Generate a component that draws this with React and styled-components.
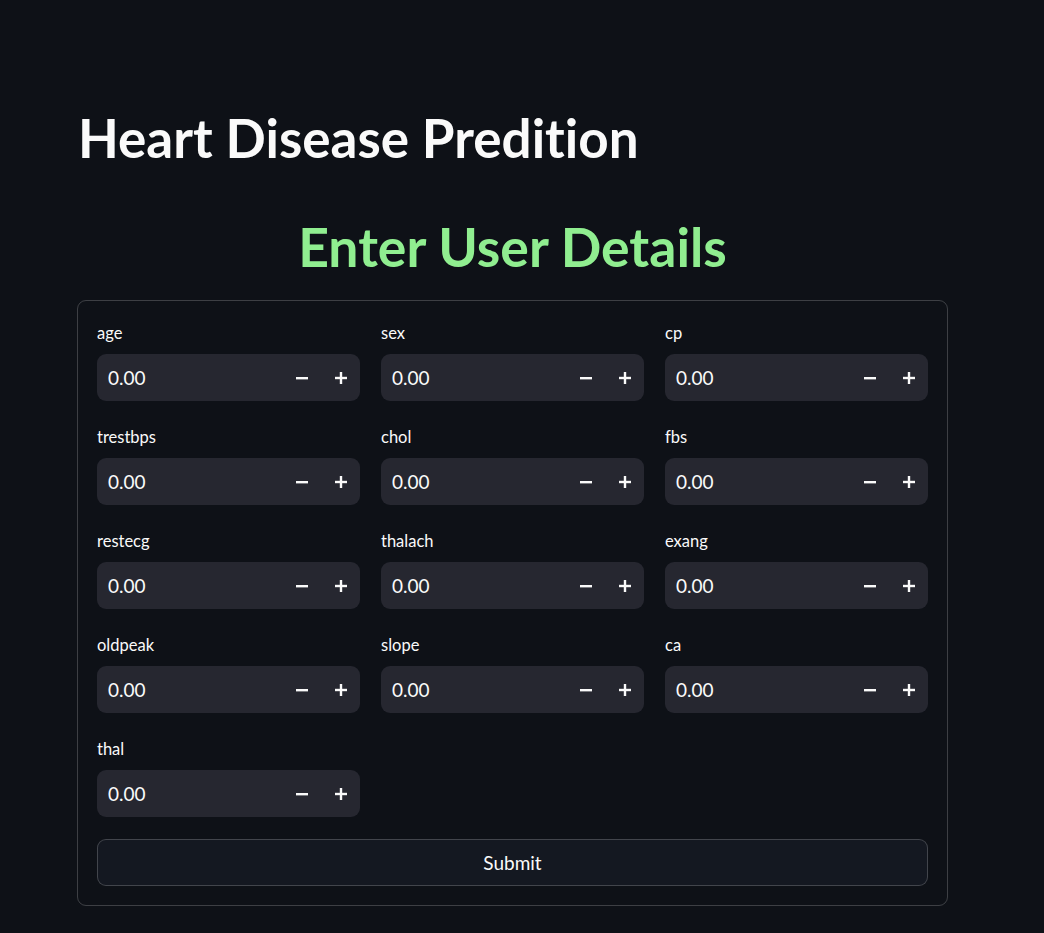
import React from "react";
import styled, { createGlobalStyle } from "styled-components";

const GlobalStyle = createGlobalStyle`
  html, body {
    margin: 0;
    padding: 0;
    background-color: #0e1117;
  }
  body {
    font-family: "Lato", "Noto Sans", sans-serif;
    font-variant-ligatures: none;
    color: #fafafa;
  }
`;

const Page = styled.div`
  min-height: 933px;
  padding: 100px 0 0 77px;
  box-sizing: border-box;
`;

const Main = styled.div`
  width: 871px;
`;

const Title = styled.h1`
  margin: 0 0 0 1px;
  font-size: 53px;
  font-weight: 700;
  line-height: 76px;
  color: #fafafa;
`;

const SubTitle = styled.h1`
  margin: 38px 0 22px;
  text-align: center;
  font-size: 53.5px;
  font-weight: 700;
  line-height: 64px;
  color: #90ee90;
`;

const Form = styled.form`
  border: 1px solid rgba(250, 250, 250, 0.2);
  border-radius: 9px;
  padding: 20px 19px 19px 19px;
`;

const Grid = styled.div`
  display: grid;
  grid-template-columns: repeat(3, 1fr);
  column-gap: 21px;
  row-gap: 24px;
`;

const Field = styled.div`
  display: flex;
  flex-direction: column;
`;

const Label = styled.label`
  font-size: 16.5px;
  line-height: 24px;
  margin-bottom: 9px;
  color: #fafafa;
`;

const InputBox = styled.div`
  display: flex;
  align-items: center;
  height: 47px;
  background-color: #262730;
  border-radius: 9px;
`;

const Value = styled.span`
  flex: 1;
  padding-left: 11px;
  font-size: 19px;
  color: #fafafa;
`;

const StepButton = styled.button`
  width: 39px;
  height: 46px;
  display: flex;
  align-items: center;
  justify-content: center;
  background: transparent;
  border: none;
  padding: 0;
  color: #fafafa;
  cursor: pointer;
`;

const SubmitButton = styled.button`
  margin-top: 22px;
  width: 100%;
  height: 47px;
  background-color: #141821;
  border: 1px solid rgba(250, 250, 250, 0.2);
  border-radius: 9px;
  color: #fafafa;
  font-family: inherit;
  font-size: 19px;
  cursor: pointer;
`;

const Minus = () => (
  <svg width="14" height="14" viewBox="0 0 14 14">
    <rect x="1" y="6" width="12" height="2.4" fill="#fafafa" />
  </svg>
);

const Plus = () => (
  <svg width="14" height="14" viewBox="0 0 14 14">
    <rect x="1" y="5.8" width="12" height="2.4" fill="#fafafa" />
    <rect x="5.8" y="1" width="2.4" height="12" fill="#fafafa" />
  </svg>
);

const fields = [
  "age", "sex", "cp",
  "trestbps", "chol", "fbs",
  "restecg", "thalach", "exang",
  "oldpeak", "slope", "ca",
  "thal",
];

const NumberInput = ({ label }) => (
  <Field>
    <Label>{label}</Label>
    <InputBox>
      <Value>0.00</Value>
      <StepButton type="button">
        <Minus />
      </StepButton>
      <StepButton type="button">
        <Plus />
      </StepButton>
    </InputBox>
  </Field>
);

const App = () => {
  return (
    <Page>
      <GlobalStyle />
      <Main>
        <Title>Heart Disease Predition</Title>
        <SubTitle>Enter User Details</SubTitle>
        <Form onSubmit={(e) => e.preventDefault()}>
          <Grid>
            {fields.map((f) => (
              <NumberInput key={f} label={f} />
            ))}
          </Grid>
          <SubmitButton type="submit">Submit</SubmitButton>
        </Form>
      </Main>
    </Page>
  );
};

export default App;
